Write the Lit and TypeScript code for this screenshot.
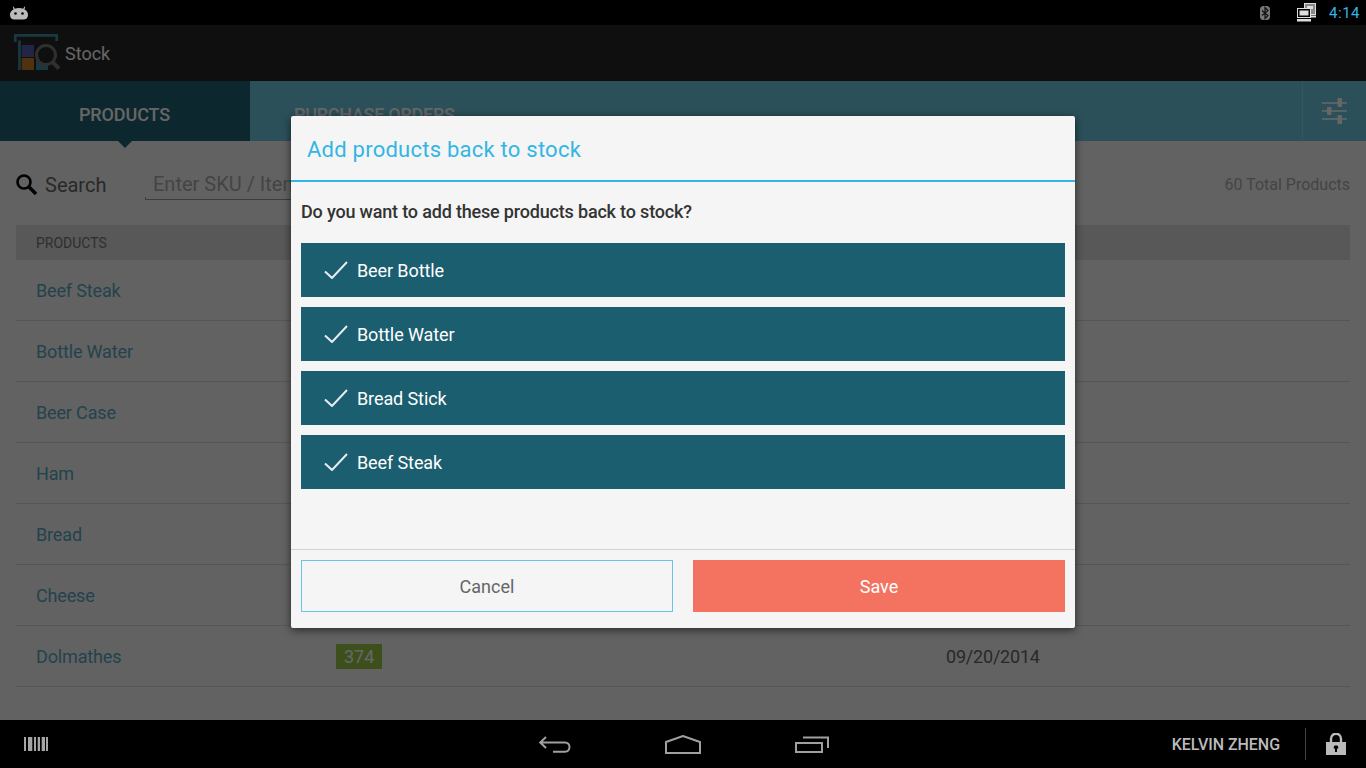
import { LitElement, html, css, svg } from "lit";
import { customElement } from "lit/decorators.js";

const rows: [string, string, string][] = [
  ["Beef Steak", "", ""],
  ["Bottle Water", "", ""],
  ["Beer Case", "", ""],
  ["Ham", "", ""],
  ["Bread", "", ""],
  ["Cheese", "", ""],
  ["Dolmathes", "374", "09/20/2014"],
];
const items = ["Beer Bottle", "Bottle Water", "Bread Stick", "Beef Steak"];

@customElement("app-root")
export class AppRoot extends LitElement {
  static styles = css`
    :host { display: block; width: 1366px; height: 768px; overflow: hidden; font-family: Roboto, "Liberation Sans", sans-serif; background: #000; }
    .shell { display: flex; flex-direction: column; height: 768px; }
    .status { height: 25px; background: #000; display: flex; align-items: center; padding: 0 6px 0 10px; flex: none; }
    .status .spacer { flex: 1; }
    .status svg { display: block; }
    .bt { margin-right: 27px; }
    .net { margin-right: 13px; }
    .time { color: #33b5e5; font-size: 15px; letter-spacing: .5px; }
    .main { flex: 1; position: relative; background: #f5f5f5; display: flex; flex-direction: column; min-height: 0; }
    .scrim { position: absolute; inset: 0; background: rgba(0,0,0,.6); }
    .bar { height: 56px; background: #262626; flex: none; display: flex; align-items: center; padding-left: 14px; color: #fff; font-size: 18px; }
    .bar svg { margin-top: -1px; }
    .bar span { margin-left: 5px; padding-top: 1px; }
    .tabs { height: 60px; flex: none; background: #6fc8df; display: flex; }
    .tab { position: relative; width: 250px; box-sizing: border-box; padding: 6px 1px 0 0; background: #1f6173; color: #fff; font-size: 18px; font-weight: 500; letter-spacing: -.12px; display: flex; align-items: center; justify-content: center; }
    .tab::after { content: ""; position: absolute; left: 118px; top: 60px; border: 7px solid transparent; border-top-color: #1f6173; border-bottom: 0; }
    .tab.off { background: none; color: #fff; width: auto; padding-left: 44px; justify-content: flex-start; letter-spacing: -.27px; flex: 1; }
    .tab.off::after { display: none; }
    .filter { width: 64px; box-sizing: border-box; border-left: 1px solid #8fd4e6; display: flex; align-items: center; justify-content: center; }
    .content { flex: 1; padding: 0 16px; display: flex; flex-direction: column; min-height: 0; }
    .search { height: 84px; box-sizing: border-box; padding-top: 3px; display: flex; align-items: center; flex: none; color: #666; }
    .search svg { margin-right: 8px; margin-left: 0; flex: none; }
    .search b { font-weight: 400; font-size: 20px; width: 100px; }
    .search .input { position: relative; width: 400px; height: 31px; box-sizing: border-box; border-bottom: 1px solid #999; color: #aaa; font-size: 20px; line-height: 30px; padding-left: 8px; white-space: nowrap; overflow: hidden; }
    .search .input::before { content: ""; position: absolute; left: 0; bottom: 0; width: 1px; height: 2px; background: #999; }
    .total { margin-left: auto; color: #aaa; font-size: 16px; }
    .head { height: 35px; flex: none; background: #dcdcdc; color: #777; font-size: 14px; line-height: 37px; padding-left: 20px; }
    .row { height: 60px; border-bottom: 1px solid #d8d8d8; display: grid; grid-template-columns: 300px 610px 1fr; align-items: center; padding-left: 20px; font-size: 18px; letter-spacing: -.2px; color: #666; }
    .row .name { color: #55a8c0; letter-spacing: -.15px; }
    .qty { display: inline-block; background: #99c846; color: #fff; padding: 0 8px; line-height: 25px; letter-spacing: 0; }
    .modal { position: absolute; left: 291px; top: 91px; width: 784px; height: 512px; background: #f5f5f5; border-radius: 2px; box-shadow: 0 2px 8px rgba(0,0,0,.6); display: flex; flex-direction: column; }
    .title { height: 66px; flex: none; box-sizing: border-box; border-bottom: 2px solid #33b5e5; color: #33b5e5; font-size: 22px; letter-spacing: .24px; padding-left: 16px; line-height: 68px; }
    .body { flex: 1; padding: 0 10px; display: flex; flex-direction: column; }
    .q { color: #333; font-size: 18px; letter-spacing: -.18px; font-weight: 500; height: 61px; line-height: 60px; flex: none; }
    .items { display: flex; flex-direction: column; gap: 10px; }
    .item { height: 54px; background: #1b5e70; color: #fff; font-size: 18px; letter-spacing: -.1px; display: flex; align-items: center; padding-left: 23px; }
    .item svg { margin-right: 9px; }
    .foot { height: 79px; flex: none; border-top: 1px solid #d2d2d2; padding: 10px 10px 16px; display: grid; grid-template-columns: 1fr 1fr; gap: 20px; box-sizing: border-box; }
    .btn { display: flex; align-items: center; justify-content: center; font-size: 18px; }
    .cancel { border: 1px solid #69c5e2; color: #666; }
    .save { background: #f37360; color: #fff; }
    .nav { height: 48px; background: #000; flex: none; display: grid; grid-template-columns: 1fr auto 1fr; align-items: center; color: #bbb; }
    .nav svg { display: block; }
    .navl { padding-left: 24px; }
    .navc { display: flex; align-items: center; gap: 94px; padding-left: 2px; }
    .navr { display: flex; justify-content: flex-end; align-items: center; font-size: 16px; font-weight: 500; letter-spacing: -.05px; padding-right: 20px; }
    .sep { width: 1px; height: 32px; background: #444; margin: 0 20px 0 25px; }
  `;

  render() {
    return html`<div class="shell">
      <div class="status">
        <svg width="18" height="14" viewBox="0 0 18 14"><path fill="#bbb" d="M3.500 3.500 2.800.8 3.500.6 4.800 2.700C7 1.900 11 1.900 13.200 2.700L14.500.6 15.200.8 14.500 3.500C17 4.500 18 6.500 18 9 18 12 16 13.500 13.500 13.500H4.500C2 13.500 0 12 0 9 0 6.500 1 4.500 3.500 3.500Z"/><circle cx="5.500" cy="7.500" r="1.300"/><circle cx="12.500" cy="7.500" r="1.300"/></svg>
        <div class="spacer"></div>
        <svg class="bt" width="10" height="14" viewBox="0 0 10 14"><rect width="10" height="14" rx="3.500" fill="#777"/><path fill="none" stroke="#111" stroke-width="1.200" d="M2 4.500 8 9.500 5 12.500V1.500L8 4.500 2 9.500"/></svg>
        <svg class="net" width="19" height="19" viewBox="0 0 19 19"><rect x="7.500" y=".5" width="11" height="11" fill="#888" stroke="#ddd"/><rect x="10" y="3" width="6" height="3" fill="#ddd"/><rect x=".5" y="5.500" width="13" height="9" fill="#000" stroke="#ddd"/><rect x="2.500" y="7.500" width="9" height="5" fill="#ddd"/><rect x="0" y="16" width="14" height="2.500" fill="#ddd"/><rect x="14" y="12.500" width="5" height="2" fill="#ddd"/></svg>
        <span class="time">4:14</span>
      </div>
      <div class="main">
        <div class="bar">
          <svg width="46" height="38" viewBox="0 0 46 38"><path fill="none" stroke="#3f8ea3" stroke-width="2.700" d="M1.300 8V1.300H42.700V7M5.500 6.500V36"/><rect x="7.700" y="11" width="12.300" height="12" fill="#5a5bb0"/><rect x="7.700" y="24" width="12.300" height="12" fill="#c77a2a"/><rect x="22" y="24" width="12" height="12" fill="#3f8ea3"/><circle cx="32" cy="21" r="9.500" fill="#262626" stroke="#777" stroke-width="3"/><path d="M38.500 28 45 34.500" stroke="#777" stroke-width="4"/></svg>
          <span>Stock</span>
        </div>
        <div class="tabs">
          <div class="tab">PRODUCTS</div>
          <div class="tab off">PURCHASE ORDERS</div>
          <div class="filter"><svg width="25" height="26" viewBox="0 0 25 26"><path stroke="#fff" stroke-width="1.600" d="M0 5H25M0 13H25M0 21H25"/><g fill="#fff"><rect x="15.500" y="0" width="4.500" height="9" rx="1"/><rect x="5" y="9" width="4.500" height="8" rx="1"/><rect x="15.500" y="17" width="4.500" height="9" rx="1"/></g></svg></div>
        </div>
        <div class="content">
          <div class="search">
            <svg width="21" height="21" viewBox="0 0 21 21"><circle cx="8" cy="8" r="6.500" fill="none" stroke="#000" stroke-width="2.600"/><path d="M12.500 12.500 20 20" stroke="#000" stroke-width="3.400"/></svg>
            <b>Search</b>
            <div class="input">Enter SKU / Item Name</div>
            <div class="total">60 Total Products</div>
          </div>
          <div class="head">PRODUCTS</div>
          ${rows.map(([n, q, d]) => html`<div class="row"><span class="name">${n}</span><span>${q ? html`<span class="qty">${q}</span>` : ""}</span><span>${d}</span></div>`)}
        </div>
        <div class="scrim"></div>
        <div class="modal">
          <div class="title">Add products back to stock</div>
          <div class="body">
            <div class="q">Do you want to add these products back to stock?</div>
            <div class="items">
              ${items.map((i) => html`<div class="item"><svg width="24" height="18" viewBox="0 0 24 18">${svg`<path fill="none" stroke="#e8eef0" stroke-width="2" d="M1 10.500 8 17 23 1"/>`}</svg>${i}</div>`)}
            </div>
          </div>
          <div class="foot"><div class="btn cancel">Cancel</div><div class="btn save">Save</div></div>
        </div>
      </div>
      <div class="nav">
        <div class="navl"><svg width="24" height="14" viewBox="0 0 24 14"><path fill="#a5a5a5" d="M0 0h2v14H0zM4 0h4.300v14H4zM10 0h2v14h-2zM13.700 0H16v14h-2.300zM17.700 0H21v14h-3.300zM22 0h2v14h-2z"/></svg></div>
        <div class="navc">
          <svg width="32" height="18" viewBox="0 0 32 18"><path fill="none" stroke="#a0a0a0" stroke-width="2" d="M7 2 1.200 7.500 7 13M1.200 7.500H26C32 7.500 32 16.700 26 16.700H14"/></svg>
          <svg width="36" height="19" viewBox="0 0 36 19"><path fill="none" stroke="#a0a0a0" stroke-width="2" d="M1 7 18 1 35 7V18H1Z"/></svg>
          <svg width="34" height="17" viewBox="0 0 34 17"><path fill="none" stroke="#a0a0a0" stroke-width="2" d="M1 7H27V16H1ZM8 1.500H33V12"/></svg>
        </div>
        <div class="navr"><span>KELVIN ZHENG</span><div class="sep"></div><svg width="20" height="22" viewBox="0 0 20 22"><path fill="none" stroke="#bbb" stroke-width="2.400" d="M5 10V6C5 -1 15 -1 15 6V10"/><path fill="#bbb" fill-rule="evenodd" d="M0 9H20V22H0ZM10 12.500A1.800 1.800 0 0 0 9 16V19H11V16A1.800 1.800 0 0 0 10 12.500Z"/></svg></div>
      </div>
    </div>`;
  }
}
